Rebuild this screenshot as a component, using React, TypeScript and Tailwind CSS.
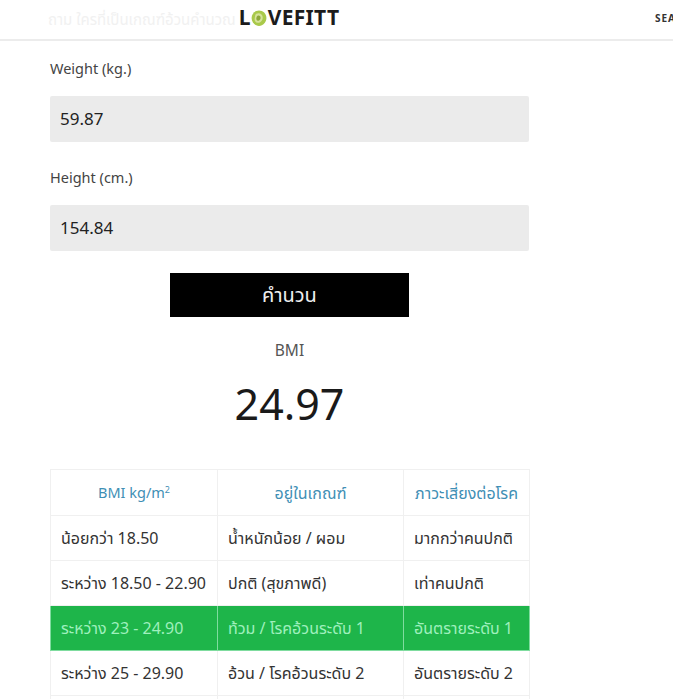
const rows = [
  ["น้อยกว่า 18.50", "น้ำหนักน้อย / ผอม", "มากกว่าคนปกติ"],
  ["ระหว่าง 18.50 - 22.90", "ปกติ (สุขภาพดี)", "เท่าคนปกติ"],
  ["ระหว่าง 23 - 24.90", "ท้วม / โรคอ้วนระดับ 1", "อันตรายระดับ 1"],
  ["ระหว่าง 25 - 29.90", "อ้วน / โรคอ้วนระดับ 2", "อันตรายระดับ 2"],
];

function Logo() {
  return (
    <div className="flex items-center text-[21px] font-bold leading-none tracking-[0.3px] text-[#1c1c1c]">
      <span>L</span>
      <svg width="18" height="18" viewBox="0 0 17 17" className="-mx-[0.5px]">
        <path d="M8.500 1.500c3.800 0 7 3 7 7s-3.200 7.500-7 7.500-7-3.500-7-7.500 3.200-7 7-7z" fill="#a9c94a" />
        <path d="M6 4.500c3-1.500 6 .5 6 3.500s-2 5-4.500 5S4 11 4.500 8.500 5 5 6 4.500z" fill="#d5e29a" />
        <path d="M7 6.500c1.500-.8 3 .2 3 1.800s-1 2.700-2.400 2.700S5.800 9.800 6 8.500 6.500 6.800 7 6.500z" fill="#8da83a" />
      </svg>
      <span>VEFITT</span>
    </div>
  );
}

function Field({ label, value }: { label: string; value: string }) {
  return (
    <div className="flex flex-col">
      <label className="text-[14.5px] leading-5 text-[#444]">{label}</label>
      <div className="mt-[18px] flex h-[46px] items-center rounded-[2px] bg-[#ebebeb] px-[10px] text-[17px] text-[#222]">
        {value}
      </div>
    </div>
  );
}

export default function App() {
  return (
    <div className="h-[699px] w-[673px] overflow-hidden bg-white font-['Noto_Sans','Noto_Sans_Thai','Noto_Sans_CJK_SC',sans-serif]">
      <header className="relative flex h-[41px] items-center justify-center border-b-2 border-[#ececec] pb-[4px] pr-[95px]">
        <span className="absolute left-[48px] top-[9px] text-[15px] leading-5 text-[#f1f1f1]">ถาม ใครที่เป็นเกณฑ์อ้วนคำนวณ</span>
        <div className="relative">
          <Logo />
        </div>
        <span className="absolute left-[655px] top-[10px] text-[10px] font-bold leading-4 tracking-[1px] text-[#333]">SEARCH</span>
      </header>

      <main className="ml-[50px] flex w-[479px] flex-col pt-[17px]">
        <div className="flex flex-col gap-[25px]">
          <Field label="Weight (kg.)" value="59.87" />
          <Field label="Height (cm.)" value="154.84" />
        </div>

        <button className="mx-auto mt-[22px] flex h-[44px] w-[239px] items-center justify-center bg-black text-[20px] text-[#eee]">
          คำนวน
        </button>

        <div className="mt-[23px] text-center text-[15.5px] leading-5 text-[#555]">BMI</div>
        <div className="mt-[15px] text-center text-[43px] leading-[58px] text-[#1a1a1a]">24.97</div>

        <table className="mt-[36px] w-[479px] table-fixed border-collapse text-[16px] text-[#333]">
          <colgroup>
            <col className="w-[167px]" />
            <col className="w-[186px]" />
            <col className="w-[126px]" />
          </colgroup>
          <thead>
            <tr className="h-[46px]">
              <th className="border border-[#f0f0f0] text-center text-[14.5px] font-normal text-[#3f8fb5]">
                BMI kg/m<sup className="text-[9px]">2</sup>
              </th>
              <th className="border border-[#f0f0f0] text-center font-normal text-[#3f8fb5]">อยู่ในเกณฑ์</th>
              <th className="border border-[#f0f0f0] text-center font-normal text-[#3f8fb5]">ภาวะเสี่ยงต่อโรค</th>
            </tr>
          </thead>
          <tbody>
            {rows.map((r, i) => {
              const on = i === 2;
              return (
                <tr key={r[0]} className={on ? "h-[45px] bg-[#1eb54a] text-[#9ff0bd]" : "h-[45px]"}>
                  {r.map((c) => (
                    <td
                      key={c}
                      className={
                        on
                          ? "whitespace-nowrap border border-[#7fdc9f] px-[10px]"
                          : "whitespace-nowrap border border-[#f0f0f0] px-[10px]"
                      }
                    >
                      {c}
                    </td>
                  ))}
                </tr>
              );
            })}
            <tr className="h-[45px]">
              <td className="border border-[#f0f0f0]" />
              <td className="border border-[#f0f0f0]" />
              <td className="border border-[#f0f0f0]" />
            </tr>
          </tbody>
        </table>
      </main>
    </div>
  );
}
